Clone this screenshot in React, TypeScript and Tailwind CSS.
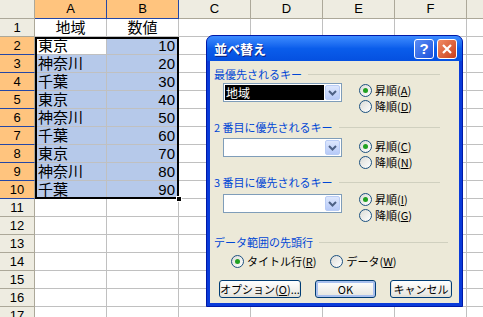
import React from 'react';

const cols = ['A', 'B', 'C', 'D', 'E', 'F'];

// シートの中身 (1行目は見出し)
const rows = [
    ['地域', '数値'],
    ['東京', '10'],
    ['神奈川', '20'],
    ['千葉', '30'],
    ['東京', '40'],
    ['神奈川', '50'],
    ['千葉', '60'],
    ['東京', '70'],
    ['神奈川', '80'],
    ['千葉', '90'],
];

const font = { fontFamily: '"Liberation Sans", "Noto Sans CJK JP", sans-serif' };
const uiFont = { fontFamily: '"Noto Sans CJK JP", "Liberation Sans", sans-serif' };

const Radio = ({ checked, text, k }: { checked?: boolean; text: string; k: string }) => (
    <div className="flex items-center h-[16px]">
        <span className="w-[13px] h-[13px] rounded-full border border-[#1C5180] bg-gradient-to-br from-[#DCDCD7] to-white flex items-center justify-center shrink-0">
            {checked && <span className="w-[5px] h-[5px] rounded-full bg-[#21A121]" />}
        </span>
        <span className="ml-[3px] text-[11px] leading-none text-black">
            {text}(<span className="underline">{k}</span>)
        </span>
    </div>
);

const Combo = ({ value }: { value?: string }) => (
    <div className="w-[119px] h-[19px] border border-[#7F9DB9] bg-white flex p-[1px] shrink-0">
        <div className="flex-1 mr-[1px]">
            {value && (
                <div className="h-full bg-black text-white text-[12px] leading-[15px] pl-[1px]">{value}</div>
            )}
        </div>
        <div className="w-[15px] h-full rounded-[2px] bg-gradient-to-b from-[#DDE7FD] to-[#B7CAF8] border border-[#B9CCF5] flex items-center justify-center">
            <svg width="9" height="6" viewBox="0 0 9 6">
                <path d="M1 1 L4.5 4.5 L8 1" stroke="#4D6185" strokeWidth="2" fill="none" />
            </svg>
        </div>
    </div>
);

const GroupLabel = ({ text, right }: { text: string; right: number }) => (
    <div className="flex items-center h-[14px]" style={{ marginRight: right }}>
        <span className="text-[11px] leading-none text-[#0046D5] whitespace-nowrap">{text}</span>
        <div className="flex-1 h-px bg-[#D0D0BF] ml-[6px]" />
    </div>
);

const XpButton = ({ children, def, w }: { children: React.ReactNode; def?: boolean; w: string }) => (
    <div
        className={`${w} h-[18px] border border-[#003C74] rounded-[3px] bg-gradient-to-b from-white to-[#E6E5DE] flex items-center justify-center text-[11px] leading-none text-black ${
            def ? 'shadow-[inset_0_0_0_2px_#A9C0EE]' : 'shadow-[inset_0_-1px_0_1px_#E3E2DA]'
        }`}
    >
        {children}
    </div>
);

const SortDialog = () => (
    <div className="absolute left-[206px] top-[35px] w-[257px] h-[272px] rounded-t-[7px] bg-[#0A3BD9] border border-[#0019A8] flex flex-col" style={uiFont}>
        {/* タイトルバー */}
        <div className="h-[25px] rounded-t-[6px] bg-gradient-to-b from-[#3D8CFF] via-[#0A5DEB] to-[#0550E0] flex items-center pl-[7px] pr-[5px]">
            <span className="text-white font-bold text-[13px] leading-none [text-shadow:1px_1px_0_#0A1E7A]">並べ替え</span>
            <div className="ml-auto flex gap-[3px]">
                <div className="w-[20px] h-[20px] rounded-[3px] border border-white bg-gradient-to-br from-[#5A8CF5] to-[#1D50DA] flex items-center justify-center text-white font-bold text-[15px] leading-none" style={font}>
                    ?
                </div>
                <div className="w-[20px] h-[20px] rounded-[3px] border border-white bg-gradient-to-br from-[#F08A63] to-[#C93D17] flex items-center justify-center">
                    <svg width="12" height="12" viewBox="0 0 12 12">
                        <path d="M2 2 L10 10 M10 2 L2 10" stroke="white" strokeWidth="2.2" />
                    </svg>
                </div>
            </div>
        </div>

        {/* 本体 */}
        <div className="flex-1 mx-[3px] mb-[3px] bg-[#ECE9D8] pt-[6px] pl-[4px] flex flex-col">
            <GroupLabel text="最優先されるキー" right={19} />
            <div className="flex mt-[1px] pl-[9px]">
                <div className="mt-[1px]">
                    <Combo value="地域" />
                </div>
                <div className="ml-[17px] flex flex-col">
                    <Radio checked text="昇順" k="A" />
                    <Radio text="降順" k="D" />
                </div>
            </div>

            <div className="mt-[6px]">
                <GroupLabel text="2 番目に優先されるキー" right={19} />
            </div>
            <div className="flex mt-[4px] pl-[9px]">
                <Combo />
                <div className="ml-[17px] flex flex-col">
                    <Radio checked text="昇順" k="C" />
                    <Radio text="降順" k="N" />
                </div>
            </div>

            <div className="mt-[5px]">
                <GroupLabel text="3 番目に優先されるキー" right={19} />
            </div>
            <div className="flex mt-[2px] pl-[9px]">
                <div className="mt-[3px]">
                    <Combo />
                </div>
                <div className="ml-[17px] flex flex-col">
                    <Radio checked text="昇順" k="I" />
                    <Radio text="降順" k="G" />
                </div>
            </div>

            <div className="mt-[12px]">
                <GroupLabel text="データ範囲の先頭行" right={11} />
            </div>
            <div className="flex mt-[4px] pl-[17px]">
                <Radio checked text="タイトル行" k="R" />
                <div className="ml-[14px]">
                    <Radio text="データ" k="W" />
                </div>
            </div>

            <div className="flex mt-[11px] pl-[5px]">
                <XpButton w="w-[82px]">
                    オプション(<span className="underline">O</span>)...
                </XpButton>
                <div className="ml-[14px]">
                    <XpButton def w="w-[61px]">OK</XpButton>
                </div>
                <div className="ml-[14px]">
                    <XpButton w="w-[62px]">キャンセル</XpButton>
                </div>
            </div>
        </div>
    </div>
);

const App = () => {
    const total = 17;
    return (
        <div className="relative w-[483px] h-[317px] overflow-hidden bg-white" style={font}>
            {/* 列見出し */}
            <div className="flex h-[19px]">
                <div className="w-[35px] shrink-0 bg-[#EEECE1] border-r border-b border-[#ACA899]" />
                {cols.map((c, i) => (
                    <div
                        key={c}
                        className={`w-[72px] shrink-0 flex items-center justify-center text-[13px] text-black border-r border-b ${
                            i < 2 ? 'bg-[#FFC47E] border-[#2447A6]' : 'bg-[#EEECE1] border-[#ACA899]'
                        }`}
                    >
                        {c}
                    </div>
                ))}
                <div className="flex-1 bg-[#EEECE1] border-b border-[#ACA899]" />
            </div>

            {/* 行 */}
            {Array.from({ length: total }).map((_, r) => {
                const n = r + 1;
                const sel = n >= 2 && n <= 10;
                const vals = rows[r] || [];
                return (
                    <div key={n} className="flex h-[18px]">
                        <div
                            className={`w-[35px] shrink-0 flex items-center justify-center text-[13px] text-black border-r border-b ${
                                sel ? 'bg-[#FFC47E] border-b-[#2447A6] border-r-[#ACA899]' : 'bg-[#EEECE1] border-[#ACA899]'
                            }`}
                        >
                            {n}
                        </div>
                        {cols.map((c, i) => {
                            const filled = sel && i < 2 && !(n === 2 && i === 0);
                            const v = vals[i];
                            const num = i === 1 && n > 1;
                            return (
                                <div
                                    key={c}
                                    className={`w-[72px] shrink-0 border-r border-b border-[#C0C0C0] flex items-end pb-[1px] text-[15px] leading-none text-black ${
                                        filled ? 'bg-[#B6C9EA]' : 'bg-white'
                                    } ${n === 1 ? 'justify-center' : num ? 'justify-end pr-[3px]' : 'pl-[3px]'}`}
                                >
                                    {v}
                                </div>
                            );
                        })}
                        <div className="flex-1 border-b border-[#C0C0C0]" />
                    </div>
                );
            })}

            {/* 選択範囲の枠 */}
            <div className="absolute left-[35px] top-[37px] w-[144px] h-[162px] border-[2px] border-black pointer-events-none" />
            <div className="absolute left-[176px] top-[196px] w-[6px] h-[6px] bg-black border border-white" />

            <SortDialog />
        </div>
    );
};

export default App;
